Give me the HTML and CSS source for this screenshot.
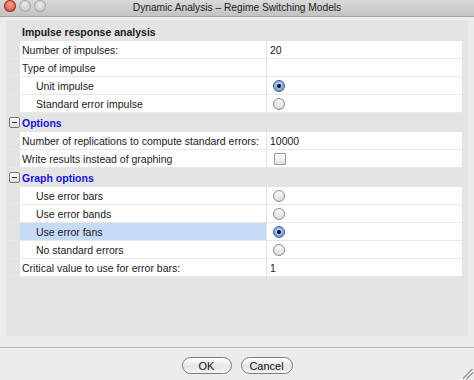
FILE: index.html
```html
<!DOCTYPE html>
<html lang="en">
<head>
  <meta charset="UTF-8">
  <meta name="viewport" content="width=device-width, initial-scale=1.0">
  <title>Dynamic Analysis - Regime Switching Models</title>
  <link rel="stylesheet" href="styles.css">
</head>
<body>
  <div class="window">
    <div class="titlebar">
      <div class="lights">
        <span class="light red"></span>
        <span class="light"></span>
        <span class="light"></span>
      </div>
      <div class="title">Dynamic Analysis – Regime Switching Models</div>
      <div></div>
    </div>

    <div class="panel">
      <div class="tree">
        <div class="row head"><span></span><span class="label">Impulse response analysis</span><span></span></div>

        <div class="row"><span></span><span class="label">Number of impulses:</span><span class="value">20</span></div>
        <div class="row"><span></span><span class="label">Type of impulse</span><span class="value"></span></div>
        <div class="row"><span></span><span class="label sub">Unit impulse</span><span class="value"><i class="radio on"></i></span></div>
        <div class="row"><span></span><span class="label sub">Standard error impulse</span><span class="value"><i class="radio"></i></span></div>

        <div class="row group"><span class="toggle"><b class="minus"></b></span><span class="label">Options</span><span></span></div>
        <div class="row"><span></span><span class="label">Number of replications to compute standard errors:</span><span class="value">10000</span></div>
        <div class="row"><span></span><span class="label">Write results instead of graphing</span><span class="value"><i class="check"></i></span></div>

        <div class="row group"><span class="toggle"><b class="minus"></b></span><span class="label">Graph options</span><span></span></div>
        <div class="row"><span></span><span class="label sub">Use error bars</span><span class="value"><i class="radio"></i></span></div>
        <div class="row"><span></span><span class="label sub">Use error bands</span><span class="value"><i class="radio"></i></span></div>
        <div class="row"><span></span><span class="label sub selected">Use error fans</span><span class="value"><i class="radio on"></i></span></div>
        <div class="row"><span></span><span class="label sub">No standard errors</span><span class="value"><i class="radio"></i></span></div>
        <div class="row"><span></span><span class="label">Critical value to use for error bars:</span><span class="value">1</span></div>
      </div>
    </div>

    <div class="footer">
      <button class="btn">OK</button>
      <button class="btn">Cancel</button>
      <span class="grip"></span>
    </div>
  </div>
</body>
</html>
```

FILE: styles.css
```css
body {
  margin: 0;
  padding: 0;
  font-family: 'Liberation Sans', 'DejaVu Sans', sans-serif;
  font-size: 10.5px;
  color: #1a1a1a;
  background-color: #ececec;
}
.window {
  width: 474px;
  height: 380px;
  display: flex;
  flex-direction: column;
  background-color: #ececec;
  position: relative;
  overflow: hidden;
}

/* title bar */
.titlebar {
  height: 16px;
  display: grid;
  grid-template-columns: 1fr auto 1fr;
  align-items: center;
  background: linear-gradient(#dadada, #c2c2c2);
  border-bottom: 1px solid #a2a2a2;
}
.lights {
  display: flex;
  gap: 3px;
  padding-left: 4px;
  margin-top: -4px;
}
.light {
  width: 12px;
  height: 12px;
  border-radius: 50%;
  background: radial-gradient(circle at 50% 35%, #ececec, #b8b8b8);
  box-shadow: inset 0 0 0 1px #a8a8a8;
}
.light.red {
  background: radial-gradient(circle at 50% 35%, #f7a090, #d0402e);
  box-shadow: inset 0 0 0 1px #a03020;
}
.title {
  font-size: 10.2px;
  color: #222;
  margin-top: -1px;
}

/* property panel */
.panel {
  margin: 3px 6px 0 6px;
  height: 313px;
  background-color: #e4e4e4;
  padding: 3px 6px 0 2px;
}
.row {
  display: grid;
  grid-template-columns: 12px 247px 1fr;
  height: 18px;
  box-sizing: border-box;
  border-bottom: 1px solid #e8e8e8;
  white-space: nowrap;
}
.row > span {
  display: flex;
  align-items: center;
}
.label {
  background-color: #fff;
  padding-left: 2px;
  border-right: 1px solid #e2e2e2;
  overflow: hidden;
}
.label.sub {
  padding-left: 16px;
}
.label.selected {
  background-color: #c6dbf6;
}
.value {
  background-color: #fff;
  padding-left: 3px;
}
.row.head {
  border-bottom: none;
  height: 18px;
}
.row.head .label {
  background: none;
  border-right: none;
  font-weight: bold;
}
.row.group {
  height: 19px;
  border-bottom: none;
}
.row.group .label {
  background: none;
  border-right: none;
  font-weight: bold;
  color: #1414d8;
}
.toggle {
  justify-content: center;
}
.minus {
  width: 9px;
  height: 9px;
  border: 1px solid #777;
  border-radius: 2px;
  background: linear-gradient(#fff, #ddd);
  position: relative;
}
.minus::after {
  content: '';
  position: absolute;
  left: 2px;
  right: 2px;
  top: 4px;
  height: 1px;
  background-color: #333;
}

/* controls */
.radio {
  width: 10px;
  height: 10px;
  margin-left: 3px;
  border-radius: 50%;
  border: 1px solid #8a8a8a;
  background: linear-gradient(#fafafa, #dcdcdc);
  position: relative;
}
.radio.on {
  border-color: #3a5d8f;
  background: radial-gradient(circle at 50% 40%, #bcd7f7, #5b8fd6);
}
.radio.on::after {
  content: '';
  position: absolute;
  left: 3px;
  top: 3px;
  width: 4px;
  height: 4px;
  border-radius: 50%;
  background-color: #111;
}
.check {
  width: 10px;
  height: 10px;
  margin-left: 4px;
  border: 1px solid #999;
  border-radius: 1px;
  background: linear-gradient(#fdfdfd, #e4e4e4);
}

/* footer */
.footer {
  flex: 1;
  display: flex;
  justify-content: center;
  align-items: flex-start;
  gap: 9px;
  margin-top: 11px;
  padding-top: 9px;
  border-top: 1px solid #b5b5b5;
  box-shadow: inset 0 1px 0 #f6f6f6;
  position: relative;
}
.btn {
  height: 17px;
  padding: 0;
  font-family: 'Liberation Sans', 'DejaVu Sans', sans-serif;
  font-size: 11px;
  color: #111;
  border: 1px solid #7e7e7e;
  border-radius: 9px;
  background: linear-gradient(#ffffff, #e6e6e6 55%, #f4f4f4);
}
.btn:first-child {
  width: 50px;
}
.btn:nth-child(2) {
  width: 52px;
}
.grip {
  position: absolute;
  right: 1px;
  bottom: 1px;
  width: 10px;
  height: 10px;
  background: linear-gradient(135deg, transparent 45%, #999 45%, #999 52%, transparent 52%, transparent 65%, #999 65%, #999 72%, transparent 72%);
}
```
